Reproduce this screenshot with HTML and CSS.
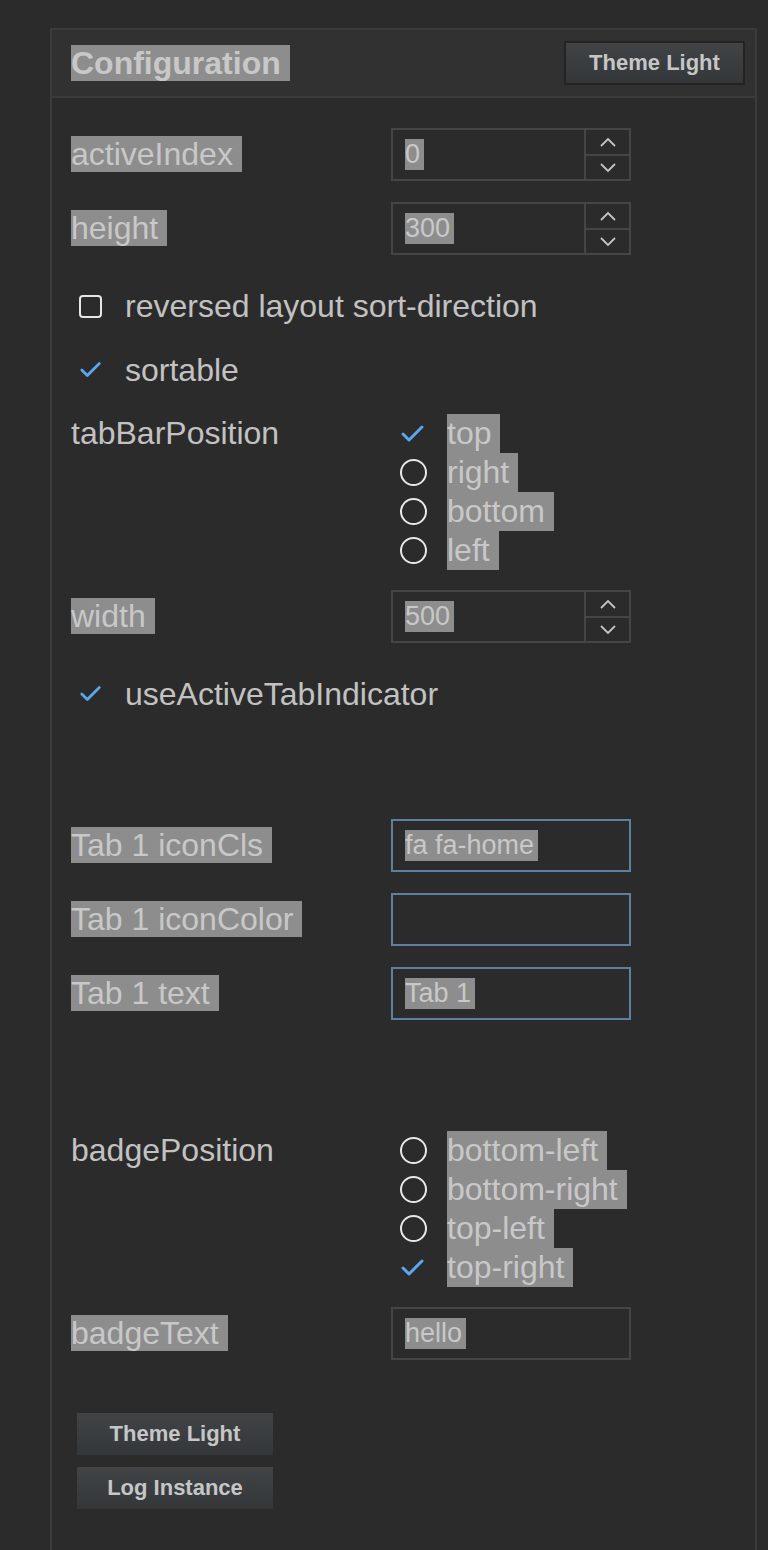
FILE: index.html
```html
<!DOCTYPE html>
<html lang="en">
<head>
  <meta charset="UTF-8" />
  <meta name="viewport" content="width=device-width, initial-scale=1" />
  <title>Configuration</title>
  <link rel="stylesheet" href="styles.css">
</head>
<body>
  <div class="panel">
    <div class="panel-header">
      <span class="title"><span class="sel">Configuration</span></span>
      <button class="btn btn-header">Theme Light</button>
    </div>

    <div class="panel-body">
      <div class="field-row">
        <span class="label"><span class="sel">activeIndex</span></span>
        <div class="spin">
          <div class="spin-value"><span class="sel-value">0</span></div>
          <div class="spin-buttons">
            <span class="spin-btn"><svg width="18" height="12" viewBox="0 0 18 12"><polyline points="2,10 9,3 16,10" /></svg></span>
            <span class="spin-btn"><svg width="18" height="12" viewBox="0 0 18 12"><polyline points="2,3 9,10 16,3" /></svg></span>
          </div>
        </div>
      </div>

      <div class="field-row">
        <span class="label"><span class="sel">height</span></span>
        <div class="spin">
          <div class="spin-value"><span class="sel-value">300</span></div>
          <div class="spin-buttons">
            <span class="spin-btn"><svg width="18" height="12" viewBox="0 0 18 12"><polyline points="2,10 9,3 16,10" /></svg></span>
            <span class="spin-btn"><svg width="18" height="12" viewBox="0 0 18 12"><polyline points="2,3 9,10 16,3" /></svg></span>
          </div>
        </div>
      </div>

      <div class="check-row">
        <span class="check-icon"><span class="box"></span></span>
        <span>reversed layout sort-direction</span>
      </div>

      <div class="check-row">
        <span class="check-icon"><svg width="26" height="20" viewBox="0 0 26 20"><polyline class="tick" points="3,10 9,16 22,3" /></svg></span>
        <span>sortable</span>
      </div>

      <div class="option-row">
        <span class="label plain">tabBarPosition</span>
        <div class="options">
          <div class="option">
            <span class="opt-icon"><svg width="26" height="20" viewBox="0 0 26 20"><polyline class="tick" points="3,10 9,16 22,3" /></svg></span>
            <span class="sel opt-text">top</span>
          </div>
          <div class="option"><span class="opt-icon"><span class="radio"></span></span><span class="sel opt-text">right</span></div>
          <div class="option"><span class="opt-icon"><span class="radio"></span></span><span class="sel opt-text">bottom</span></div>
          <div class="option"><span class="opt-icon"><span class="radio"></span></span><span class="sel opt-text">left</span></div>
        </div>
      </div>

      <div class="field-row">
        <span class="label"><span class="sel">width</span></span>
        <div class="spin">
          <div class="spin-value"><span class="sel-value">500</span></div>
          <div class="spin-buttons">
            <span class="spin-btn"><svg width="18" height="12" viewBox="0 0 18 12"><polyline points="2,10 9,3 16,10" /></svg></span>
            <span class="spin-btn"><svg width="18" height="12" viewBox="0 0 18 12"><polyline points="2,3 9,10 16,3" /></svg></span>
          </div>
        </div>
      </div>

      <div class="check-row">
        <span class="check-icon"><svg width="26" height="20" viewBox="0 0 26 20"><polyline class="tick" points="3,10 9,16 22,3" /></svg></span>
        <span>useActiveTabIndicator</span>
      </div>

      <div class="gap-tabs"></div>

      <div class="field-row">
        <span class="label"><span class="sel">Tab 1 iconCls</span></span>
        <div class="text-input focus"><span class="sel-value">fa fa-home</span></div>
      </div>

      <div class="field-row">
        <span class="label"><span class="sel">Tab 1 iconColor</span></span>
        <div class="text-input focus"></div>
      </div>

      <div class="field-row">
        <span class="label"><span class="sel">Tab 1 text</span></span>
        <div class="text-input focus"><span class="sel-value">Tab 1</span></div>
      </div>

      <div class="gap-badge"></div>

      <div class="option-row">
        <span class="label plain">badgePosition</span>
        <div class="options">
          <div class="option"><span class="opt-icon"><span class="radio"></span></span><span class="sel opt-text">bottom-left</span></div>
          <div class="option"><span class="opt-icon"><span class="radio"></span></span><span class="sel opt-text">bottom-right</span></div>
          <div class="option"><span class="opt-icon"><span class="radio"></span></span><span class="sel opt-text">top-left</span></div>
          <div class="option">
            <span class="opt-icon"><svg width="26" height="20" viewBox="0 0 26 20"><polyline class="tick" points="3,10 9,16 22,3" /></svg></span>
            <span class="sel opt-text">top-right</span>
          </div>
        </div>
      </div>

      <div class="field-row">
        <span class="label"><span class="sel">badgeText</span></span>
        <div class="text-input"><span class="sel-value">hello</span></div>
      </div>

      <div class="actions">
        <button class="btn btn-action">Theme Light</button>
        <button class="btn btn-action">Log Instance</button>
      </div>
    </div>
  </div>
</body>
</html>
```

FILE: styles.css
```css
:root {
  --page-bg: #2b2b2b;
  --header-bg: #313131;
  --panel-border: #3b3b3b;
  --field-border: #454545;
  --focus-border: #5f7f9f;
  --text-color: #c2c2c2;
  --sel-bg: #8d8d8d;
  --sel-text: #c8c8c8;
  --tick-color: #5aa6ef;
}

body {
  margin: 0;
  padding: 28px 11px 0 50px;
  background-color: var(--page-bg);
  font-family: "Liberation Sans", Arial, sans-serif;
  color: var(--text-color);
}

.panel {
  border: 2px solid var(--panel-border);
  border-bottom: none;
  min-height: 1530px;
}

.panel-header {
  display: flex;
  justify-content: space-between;
  align-items: center;
  height: 66px;
  padding: 0 10px 0 19px;
  background-color: var(--header-bg);
  border-bottom: 2px solid var(--panel-border);
}

.title {
  font-size: 32px;
  font-weight: bold;
}

.sel {
  background-color: var(--sel-bg);
  color: var(--sel-text);
  padding-right: 9px;
}

.sel-value {
  background-color: var(--sel-bg);
  color: var(--sel-text);
  padding-right: 4px;
}

.btn {
  font-family: "Liberation Sans", Arial, sans-serif;
  font-weight: bold;
  font-size: 22px;
  color: #c6c6c6;
  background: linear-gradient(#404447, #33373a);
  cursor: pointer;
  padding: 0;
}

.btn-header {
  width: 181px;
  height: 44px;
  border: 2px solid #232323;
}

.panel-body {
  padding: 30px 19px 40px;
}

.field-row {
  display: grid;
  grid-template-columns: 320px 240px;
  align-items: center;
  height: 53px;
  margin-bottom: 21px;
}

.label {
  font-size: 32px;
}

.plain {
  color: var(--text-color);
  line-height: 39px;
}

.spin,
.text-input {
  display: flex;
  height: 53px;
  box-sizing: border-box;
  border: 2px solid var(--field-border);
  font-size: 27px;
}

.text-input {
  align-items: center;
  padding-left: 12px;
}

.text-input.focus {
  border-color: var(--focus-border);
}

.spin-value {
  flex: 1;
  display: flex;
  align-items: center;
  padding-left: 12px;
}

.spin-buttons {
  width: 43px;
  display: flex;
  flex-direction: column;
  border-left: 2px solid var(--field-border);
}

.spin-btn {
  flex: 1;
  display: flex;
  align-items: center;
  justify-content: center;
}

.spin-btn:first-child {
  border-bottom: 2px solid var(--field-border);
}

.spin-btn polyline {
  fill: none;
  stroke: #c4c4c4;
  stroke-width: 1.8;
}

.check-row {
  display: flex;
  align-items: center;
  height: 60px;
  margin-bottom: 4px;
  padding-left: 8px;
  font-size: 32px;
}

.check-icon {
  width: 24px;
  margin-right: 22px;
  display: flex;
  align-items: center;
}

.box {
  width: 19px;
  height: 19px;
  border: 2px solid #e6e6e6;
  border-radius: 4px;
}

.tick {
  fill: none;
  stroke: var(--tick-color);
  stroke-width: 3;
  stroke-linecap: round;
  stroke-linejoin: round;
}

.option-row {
  display: grid;
  grid-template-columns: 320px auto;
  align-items: start;
  padding-top: 10px;
  margin-bottom: 20px;
}

.options {
  padding-left: 9px;
}

.option {
  display: flex;
  align-items: center;
  height: 39px;
  font-size: 32px;
}

.opt-icon {
  width: 28px;
  margin-right: 19px;
  display: flex;
  align-items: center;
}

.radio {
  width: 23px;
  height: 23px;
  border: 2px solid #e8e8e8;
  border-radius: 50%;
}

.opt-text {
  display: inline-block;
  line-height: 39px;
}

.gap-tabs {
  height: 91px;
}

.gap-badge {
  height: 80px;
}

.actions {
  display: flex;
  flex-direction: column;
  align-items: flex-start;
  gap: 12px;
  padding: 32px 0 0 6px;
}

.btn-action {
  width: 196px;
  height: 42px;
  border: none;
}
```
